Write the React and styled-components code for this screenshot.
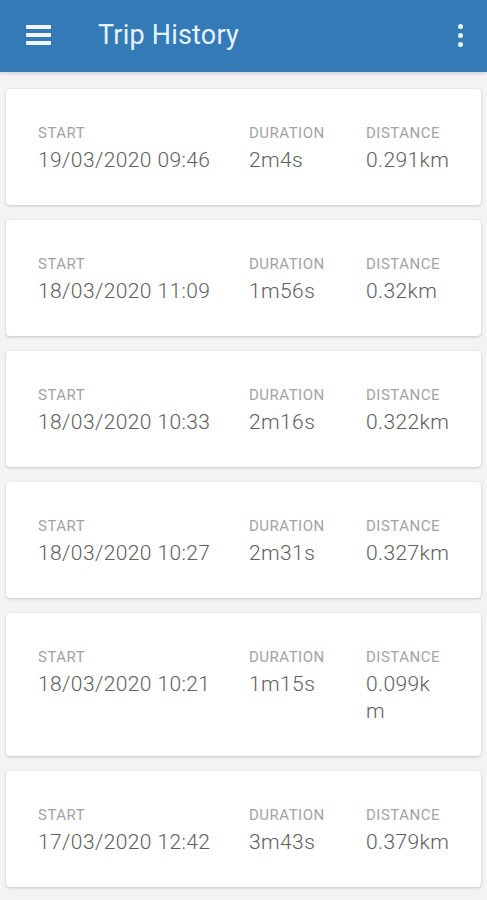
import styled, { createGlobalStyle } from 'styled-components'

const GlobalStyle = createGlobalStyle`
  html, body {
    margin: 0;
    padding: 0;
    background: #f3f3f3;
    font-family: Roboto, "Liberation Sans", sans-serif;
  }
`

const trips = [
  { start: '19/03/2020 09:46', duration: '2m4s', distance: '0.291km' },
  { start: '18/03/2020 11:09', duration: '1m56s', distance: '0.32km' },
  { start: '18/03/2020 10:33', duration: '2m16s', distance: '0.322km' },
  { start: '18/03/2020 10:27', duration: '2m31s', distance: '0.327km' },
  { start: '18/03/2020 10:21', duration: '1m15s', distance: '0.099km', wrap: true },
  { start: '17/03/2020 12:42', duration: '3m43s', distance: '0.379km' },
]

const Page = styled.div`
  min-height: 900px;
  background: #f3f3f3;
`

const Toolbar = styled.header`
  height: 72px;
  background: #347ab6;
  display: flex;
  align-items: center;
  padding: 0 24px 0 26px;
  box-sizing: border-box;
  box-shadow: 0 2px 3px rgba(0, 0, 0, 0.12);
`

const MenuButton = styled.div`
  width: 25px;
  height: 20px;
  display: flex;
  flex-direction: column;
  justify-content: space-between;
  margin-top: -2px;

  span {
    display: block;
    height: 4px;
    background: #eef6fc;
    border-radius: 1px;
  }
`

const Title = styled.h1`
  margin: -2px 0 0 47px;
  flex: 1;
  font-size: 27px;
  font-weight: 400;
  color: #e6f2fb;
  letter-spacing: 0.2px;
`

const MoreButton = styled.div`
  display: flex;
  flex-direction: column;
  gap: 4px;
  margin-top: -2px;

  span {
    width: 5px;
    height: 5px;
    border-radius: 50%;
    background: #e6f2fb;
  }
`

const List = styled.main`
  display: flex;
  flex-direction: column;
  gap: 15px;
  padding: 17px 6px 12px;
`

const Card = styled.section`
  background: #fff;
  border-radius: 4px;
  box-shadow: 0 1px 3px rgba(0, 0, 0, 0.18), 0 0 1px rgba(0, 0, 0, 0.08);
  padding: 35px 31px 31px 32px;
  display: grid;
  grid-template-columns: 211px 117px 1fr;
`

const Field = styled.div`
  display: flex;
  flex-direction: column;
  gap: 5px;
`

const Label = styled.div`
  font-size: 15px;
  line-height: 18px;
  color: #a3a3a3;
  text-transform: uppercase;
  letter-spacing: 0.5px;
`

const Value = styled.div`
  font-size: 21px;
  line-height: 27px;
  font-weight: 300;
  color: #5e5e5e;
  letter-spacing: 0.4px;
  max-width: ${(p) => (p.$narrow ? '74px' : 'none')};
  word-break: ${(p) => (p.$narrow ? 'break-all' : 'normal')};
`

function TripCard({ trip }) {
  return (
    <Card>
      <Field>
        <Label>Start</Label>
        <Value>{trip.start}</Value>
      </Field>
      <Field>
        <Label>Duration</Label>
        <Value>{trip.duration}</Value>
      </Field>
      <Field>
        <Label>Distance</Label>
        <Value $narrow={trip.wrap}>{trip.distance}</Value>
      </Field>
    </Card>
  )
}

export default function App() {
  return (
    <>
      <GlobalStyle />
      <Page>
        <Toolbar>
          <MenuButton>
            <span />
            <span />
            <span />
          </MenuButton>
          <Title>Trip History</Title>
          <MoreButton>
            <span />
            <span />
            <span />
          </MoreButton>
        </Toolbar>
        <List>
          {trips.map((trip) => (
            <TripCard key={trip.start} trip={trip} />
          ))}
        </List>
      </Page>
    </>
  )
}
